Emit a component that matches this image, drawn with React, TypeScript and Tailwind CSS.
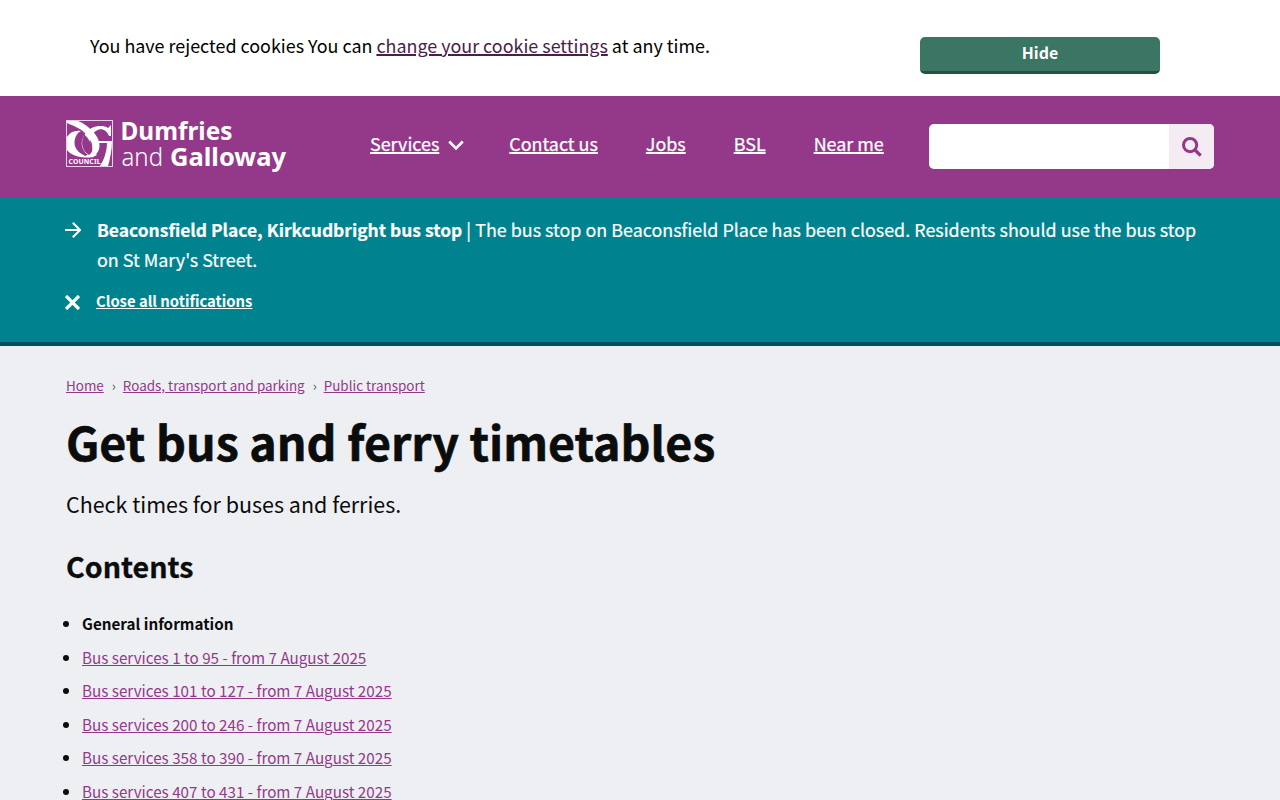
const list = [
  "Bus services 1 to 95 - from 7 August 2025",
  "Bus services 101 to 127 - from 7 August 2025",
  "Bus services 200 to 246 - from 7 August 2025",
  "Bus services 358 to 390 - from 7 August 2025",
  "Bus services 407 to 431 - from 7 August 2025",
];

function Logo() {
  return (
    <svg width="222" height="54" viewBox="0 0 222 54" fill="none" className="mt-6 shrink-0 overflow-visible">
      <rect x="0.5" y="0.5" width="46" height="46" stroke="#e6cfe4" />
      <path d="M1 1H12C18 3 24 8 29 14C37 24 34 35 24 37.5L18 36.5C29 33 28 23 21 15C16 9 8 6 1 3Z" fill="#fff" />
      <path d="M15 11C9 10 4 12 1 17V30C5 35 13 38 24 37.5C14 35 8 29 8.500 22C9 17 11 13 15 11Z" fill="#fff" />
      <path d="M45 5V16H43C40 8 32 7 27 14C22 21 24 29 31 35L26 37.5C15 32 13 22 19 14C24 6 36 4 42 8Z" fill="#fff" />
      <path d="M18.500 14.500C14 22 16 31 23 35C26 33 27 30 26 27C25 22 22 18 18.500 14.500Z" fill="#94398a" />
      <path d="M33 21H46C46 30 44 39 42 46H34C38 40 41 31 41 23H33Z" fill="#fff" />
      <g fill="#fff" fontFamily="Noto Sans, sans-serif">
        <text x="2.5" y="43.7" fontSize="6.8" fontWeight="700" textLength="32">COUNCIL</text>
        <text x="54.5" y="19.5" fontSize="24.5" fontWeight="700" textLength="112" lengthAdjust="spacingAndGlyphs">Dumfries</text>
        <text x="55.5" y="46" fontSize="25" fontWeight="300" textLength="41.5" lengthAdjust="spacingAndGlyphs">and</text>
        <text x="104" y="46" fontSize="24.5" fontWeight="700" textLength="116" lengthAdjust="spacingAndGlyphs">Galloway</text>
      </g>
    </svg>
  );
}

export default function App() {
  return (
    <div className="h-[800px] overflow-hidden bg-[#eeeff3] font-['Noto_Sans_CJK_SC',sans-serif] text-[#0b0c0c]">
      <div className="flex h-24 items-start justify-between bg-white pr-[120px] pl-[90px]">
        <p className="pt-[30px] text-[17.92px] leading-[30px] text-black">
          You have rejected cookies You can{" "}
          <a className="text-[#4c1d49] underline decoration-2 underline-offset-[1px]">change your cookie settings</a> at any time.
        </p>
        <button className="mt-[37px] h-[37px] w-60 rounded-[5px] border-b-[3px] border-[#26503f] bg-[#3b7564] pb-[3px] text-[15.9px] leading-[30px] font-bold text-white">
          Hide
        </button>
      </div>
      <header className="flex h-[101px] items-start bg-[#94398a] pl-[66px] text-white">
        <Logo />
        <nav className="ml-[82px] flex pt-8 text-[17.92px] leading-[30px] [-webkit-text-stroke:0.25px_#fff]">
          <span className="flex w-[139.3px]">
            <a className="underline decoration-2 underline-offset-[1px]">Services</a>
            <svg width="16" height="11" viewBox="0 0 16 11" className="mt-3 ml-[9px]" fill="none" stroke="#fff" strokeWidth="2.6">
              <path d="M1.2 1.5L8 8.5L14.8 1.5" />
            </svg>
          </span>
          <a className="mr-12 underline decoration-2 underline-offset-[1px]">Contact us</a>
          <a className="mr-12 underline decoration-2 underline-offset-[1px]">Jobs</a>
          <a className="mr-12 underline decoration-2 underline-offset-[1px]">BSL</a>
          <a className="underline decoration-2 underline-offset-[1px]">Near me</a>
        </nav>
        <form className="mt-7 mr-[66px] ml-auto flex h-[45px] w-[285px] overflow-hidden rounded-[5px] bg-white">
          <span className="flex-1" />
          <span className="flex w-[45px] items-center justify-center bg-[#f4ebf3]">
            <svg width="20" height="20" viewBox="0 0 20 20" fill="none" stroke="#94398a" className="mt-px">
              <circle cx="8.1" cy="8.1" r="6.6" strokeWidth="3" />
              <path d="M13 13L18.7 18.7" strokeWidth="3.2" />
            </svg>
          </span>
        </form>
      </header>
      <section className="h-[149px] border-b-4 border-[#00505c] bg-[#00838f] pr-[66px] pl-[65px] text-white">
        <div className="flex pt-[17px]">
          <svg width="16" height="16" viewBox="0 0 16 16" fill="none" stroke="#fff" strokeWidth="2" className="mt-2 mr-4 shrink-0">
            <path d="M0 8H15M7.8 .8L15 8L7.8 15.2" />
          </svg>
          <p className="text-[17.92px] leading-[30px] [-webkit-text-stroke:0.2px_#fff]">
            <b className="text-[17.43px] leading-none">Beaconsfield Place, Kirkcudbright bus stop</b> | The bus stop on Beaconsfield Place has been closed. Residents should use the bus stop on St Mary's Street.
          </p>
        </div>
        <div className="mt-[15px] flex items-start">
          <svg width="15" height="15" viewBox="0 0 15 15" stroke="#fff" strokeWidth="3.3" className="mt-[5.5px] mr-4">
            <path d="M1 1L14 14M14 1L1 14" />
          </svg>
          <a className="text-[14.82px] leading-6 font-bold underline decoration-1 underline-offset-[1px]">Close all notifications</a>
        </div>
      </section>
      <main className="pl-[66px]">
        <nav className="flex pt-[29px] text-[13.45px] leading-5 text-[#94398a]">
          <a className="underline underline-offset-[1px]">Home</a>
          <span className="w-[19px] pl-px text-center text-[#505a5f]">›</span>
          <a className="underline underline-offset-[1px]">Roads, transport and parking</a>
          <span className="w-[19px] pl-px text-center text-[#505a5f]">›</span>
          <a className="underline underline-offset-[1px]">Public transport</a>
        </nav>
        <h1 className="mt-[19px] text-[46.55px] leading-[54px] font-bold [-webkit-text-stroke:0.6px_#0b0c0c]">Get bus and ferry timetables</h1>
        <p className="mt-[18px] text-[21.47px] leading-9">Check times for buses and ferries.</p>
        <h2 className="mt-6 text-[28.65px] leading-10 font-bold [-webkit-text-stroke:0.3px_#0b0c0c]">Contents</h2>
        <ul className="mt-[23px] list-disc pl-4 text-[15.23px] leading-[28.5px]">
          <li className="mb-[5px] font-bold">General information</li>
          {list.map((t) => (
            <li key={t} className="mb-[5px]">
              <a className="text-[#94398a] underline decoration-1 underline-offset-[1px]">{t}</a>
            </li>
          ))}
        </ul>
      </main>
    </div>
  );
}
